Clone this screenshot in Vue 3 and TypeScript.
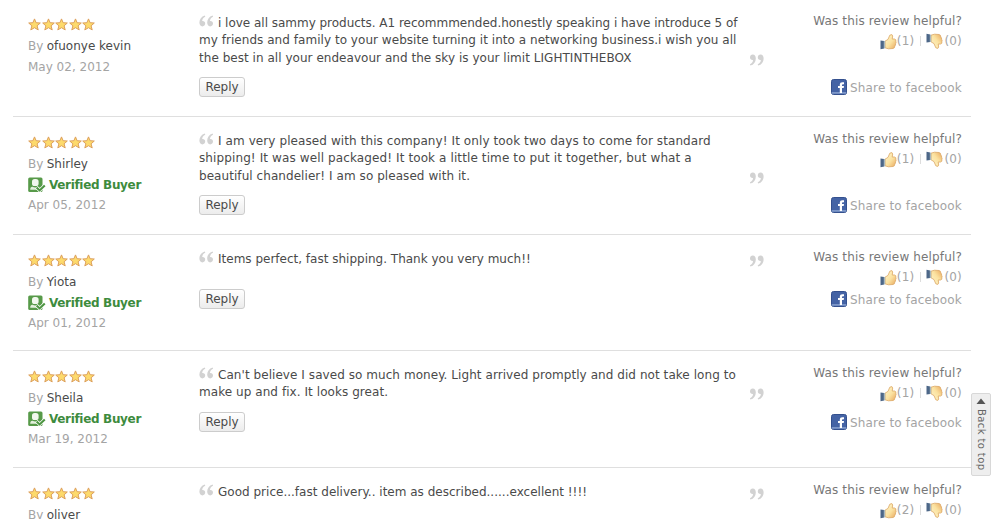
<template>
  <div class="reviews">
    <svg class="defs" width="0" height="0" aria-hidden="true">
      <defs>
        <linearGradient id="hand" x1="0" y1="0" x2="1" y2="1">
          <stop offset="0" stop-color="#fff6cf" />
          <stop offset="0.55" stop-color="#fbe2a0" />
          <stop offset="1" stop-color="#e8a65c" />
        </linearGradient>
        <symbol id="thumb" viewBox="0 0 17 17">
          <path d="M5 8.2 L8 6.4 L9.8 2.2 Q12.4 .6 12.7 3 L12.2 6 L14.6 6 Q16.4 6.5 15.8 8.2 Q16.5 9.6 15.6 10.7 Q15.8 12.2 14.8 13 Q14.8 15.3 13 15.5 L8.5 15.8 L5 14.8 Z" fill="url(#hand)" stroke="#dca763" stroke-width="0.8" />
          <path d="M.5 7.5 L4.2 8 L4.2 15.4 L.5 16.2 Z" fill="#4d6788" />
          <path d="M3.8 8 L5.2 8 L5.2 15 L3.8 15.4 Z" fill="#a9b8bf" />
        </symbol>
        <symbol id="quote" viewBox="0 0 15 12">
          <path d="M5.8 .4 C2.4 1.4 .4 4.2 .4 7.6 C.4 10 1.6 11.4 3.4 11.4 C5.1 11.4 6.2 10.2 6.2 8.6 C6.2 7 5 5.9 3.2 6.1 C3.2 4.1 4.3 2.7 6.3 1.8 Z" fill="#d2d2d2" />
          <path d="M13.6 .4 C10.2 1.4 8.2 4.2 8.2 7.6 C8.2 10 9.4 11.4 11.2 11.4 C12.9 11.4 14 10.2 14 8.6 C14 7 12.8 5.9 11 6.1 C11 4.1 12.1 2.7 14.1 1.8 Z" fill="#d2d2d2" />
        </symbol>
      </defs>
    </svg>

    <div
      v-for="review in reviews"
      :key="review.author"
      class="review"
      :style="{ height: review.height + 'px' }"
    >
      <div class="author">
        <div class="stars">
          <svg v-for="n in 5" :key="n" width="13" height="13" viewBox="0 0 13 13">
            <path d="M6.5 .9 L8.1 4.7 L12.3 5 L9.1 7.8 L10.2 11.9 L6.5 9.7 L2.8 11.9 L3.9 7.8 L.7 5 L4.9 4.7 Z" fill="#fdda6c" stroke="#dc9f5c" stroke-width="1" stroke-linejoin="round" />
          </svg>
        </div>
        <div class="by">By <span class="name">{{ review.author }}</span></div>
        <div v-if="review.verified" class="verified">
          <svg width="18" height="16" viewBox="0 0 18 16">
            <rect x="0.2" y="0.5" width="14.3" height="14.5" rx="1.5" fill="#579a49" />
            <rect x="4" y="2" width="6.6" height="7" rx="2.6" fill="#f2f8ee" />
            <path d="M2.2 12.8 Q2.2 9.6 4.6 9.8 Q7.3 11.4 10 9.8 L12 11 L11 12.8 Z" fill="#e4f0dd" />
            <path d="M8.4 10.2 L11.6 13.4 L16.9 8.2" fill="none" stroke="#fff" stroke-width="3.4" />
            <path d="M8.6 10.4 L11.6 13.4 L16.8 8.4" fill="none" stroke="#4c9541" stroke-width="2.1" />
          </svg>
          <span>Verified Buyer</span>
        </div>
        <div class="date">{{ review.date }}</div>
      </div>

      <div class="body">
        <div class="top">
          <div class="text">
            <div v-for="(line, i) in review.lines" :key="i" class="line">
              <svg v-if="i === 0" class="open" width="15" height="12"><use href="#quote" /></svg>
              <span :style="{ letterSpacing: line.spacing + 'px' }">{{ line.text }}</span>
            </div>
            <svg class="close" width="15" height="12"><use href="#quote" /></svg>
          </div>
          <div class="helpful">
            <div class="question">Was this review helpful?</div>
            <div class="votes">
              <svg width="17" height="17"><use href="#thumb" /></svg>
              <span>({{ review.up }})</span>
              <i class="sep"></i>
              <svg class="down" width="17" height="17"><use href="#thumb" /></svg>
              <span>({{ review.down }})</span>
            </div>
          </div>
        </div>
        <div class="actions">
          <button class="reply">Reply</button>
          <a class="share">
            <svg width="16" height="16" viewBox="0 0 16 16">
              <rect x="0.5" y="0.5" width="15" height="15" rx="2" fill="#4463a5" stroke="#34508e" />
              <rect x="1" y="13" width="14" height="1.8" fill="#7c96c8" />
              <path d="M8.8 14 V9.1 H7 V7 H8.8 V5.6 Q8.8 3.2 11.2 3.2 H13 V5.3 H11.9 Q11 5.3 11 6.2 V7 H13 L12.7 9.1 H11 V14 Z" fill="#fff" />
            </svg>
            <span>Share to facebook</span>
          </a>
        </div>
      </div>
    </div>

    <a class="back-to-top">
      <svg width="10" height="7" viewBox="0 0 10 7"><path d="M5 0.5 L9.5 6 H0.5 Z" fill="#555" /></svg>
      <span>Back to top</span>
    </a>
  </div>
</template>

<script setup lang="ts">
interface Line {
  text: string;
  spacing: number;
}

interface Review {
  author: string;
  verified: boolean;
  date?: string;
  lines: Line[];
  up: number;
  down: number;
  height: number;
}

const reviews: Review[] = [
  {
    author: 'ofuonye kevin',
    verified: false,
    date: 'May 02, 2012',
    lines: [
      { text: 'i love all sammy products. A1 recommmended.honestly speaking i have introduce 5 of', spacing: -0.02 },
      { text: 'my friends and family to your website turning it into a networking business.i wish you all', spacing: 0.04 },
      { text: 'the best in all your endeavour and the sky is your limit LIGHTINTHEBOX', spacing: 0.035 }
    ],
    up: 1,
    down: 0,
    height: 118
  },
  {
    author: 'Shirley',
    verified: true,
    date: 'Apr 05, 2012',
    lines: [
      { text: 'I am very pleased with this company! It only took two days to come for standard', spacing: 0.09 },
      { text: 'shipping! It was well packaged! It took a little time to put it together, but what a', spacing: 0.11 },
      { text: 'beautiful chandelier! I am so pleased with it.', spacing: 0.06 }
    ],
    up: 1,
    down: 0,
    height: 118
  },
  {
    author: 'Yiota',
    verified: true,
    date: 'Apr 01, 2012',
    lines: [{ text: 'Items perfect, fast shipping. Thank you very much!!', spacing: 0 }],
    up: 1,
    down: 0,
    height: 116
  },
  {
    author: 'Sheila',
    verified: true,
    date: 'Mar 19, 2012',
    lines: [
      { text: "Can't believe I saved so much money. Light arrived promptly and did not take long to", spacing: 0.06 },
      { text: 'make up and fix. It looks great.', spacing: 0.06 }
    ],
    up: 1,
    down: 0,
    height: 117
  },
  {
    author: 'oliver',
    verified: false,
    lines: [{ text: 'Good price...fast delivery.. item as described......excellent !!!!', spacing: 0.01 }],
    up: 2,
    down: 0,
    height: 117
  }
];
</script>

<style>
body {
  margin: 0;
  background: #fff;
}
</style>

<style scoped>
.reviews {
  position: relative;
  width: 1000px;
  height: 519px;
  overflow: hidden;
  font-family: "DejaVu Sans", Verdana, sans-serif;
  font-size: 12px;
  color: #4a4a4a;
}

.defs {
  position: absolute;
}

.review {
  box-sizing: border-box;
  display: flex;
  width: 958px;
  margin-left: 13px;
  padding: 14px 9px 0 15px;
  border-bottom: 1px solid #dfdfdf;
  white-space: nowrap;
}

.review:first-of-type {
  margin-top: -1px;
}

.author {
  width: 171px;
  flex-shrink: 0;
  padding-top: 3px;
  color: #a4a4a4;
}

.stars {
  display: flex;
  gap: 0.5px;
  height: 17px;
  align-items: center;
  margin-bottom: 3px;
}

.by,
.date {
  height: 21px;
  line-height: 21px;
}

.name {
  margin-left: -0.5px;
  color: #4a4a4a;
}

.verified {
  display: flex;
  align-items: center;
  gap: 3px;
  height: 20px;
  line-height: 20px;
  font-weight: bold;
  letter-spacing: -0.33px;
  color: #3d8b3d;
}

.body {
  flex: 1;
}

.top {
  display: flex;
  justify-content: space-between;
  align-items: flex-start;
  min-height: 30px;
}

.text {
  position: relative;
  width: 566px;
  padding-top: 1.5px;
  line-height: 17.5px;
}

.line {
  display: flex;
  align-items: flex-start;
  height: 17.5px;
}

.open {
  flex-shrink: 0;
  margin-right: 4px;
}

.close {
  position: absolute;
  right: 1px;
  bottom: 1.5px;
  transform: rotate(180deg);
}

.helpful {
  height: 30px;
  text-align: right;
}

.question {
  height: 16px;
  line-height: 16px;
  letter-spacing: 0.15px;
  color: #777;
}

.votes {
  display: flex;
  justify-content: flex-end;
  align-items: center;
  height: 24px;
  letter-spacing: 0.2px;
  color: #a4a4a4;
}

.sep {
  width: 1px;
  height: 10px;
  margin: 0 5px 0 6px;
  background: #ddd;
}

.down {
  margin-right: 1px;
  transform: scaleY(-1);
}

.actions {
  display: flex;
  justify-content: space-between;
  align-items: center;
  height: 20px;
  margin-top: 10px;
}

.reply {
  box-sizing: border-box;
  width: 46px;
  height: 20px;
  padding: 0;
  border: 1px solid #ccc;
  border-radius: 3px;
  background: linear-gradient(#fff, #ececec);
  font: inherit;
  line-height: 18px;
  color: #4a4a4a;
}

.share {
  display: flex;
  align-items: center;
  gap: 3px;
  letter-spacing: 0.17px;
  color: #a4a4a4;
}

.share span {
  padding-top: 2px;
}

.back-to-top {
  position: absolute;
  left: 971px;
  top: 393px;
  box-sizing: border-box;
  display: flex;
  flex-direction: column;
  align-items: center;
  gap: 4px;
  width: 20px;
  height: 83px;
  padding-top: 4px;
  border: 1px solid #d8d8d8;
  border-radius: 2px;
  background: #eee;
  font-size: 10px;
  letter-spacing: 0.4px;
  color: #666;
}

.back-to-top span {
  writing-mode: vertical-rl;
  white-space: nowrap;
}
</style>
